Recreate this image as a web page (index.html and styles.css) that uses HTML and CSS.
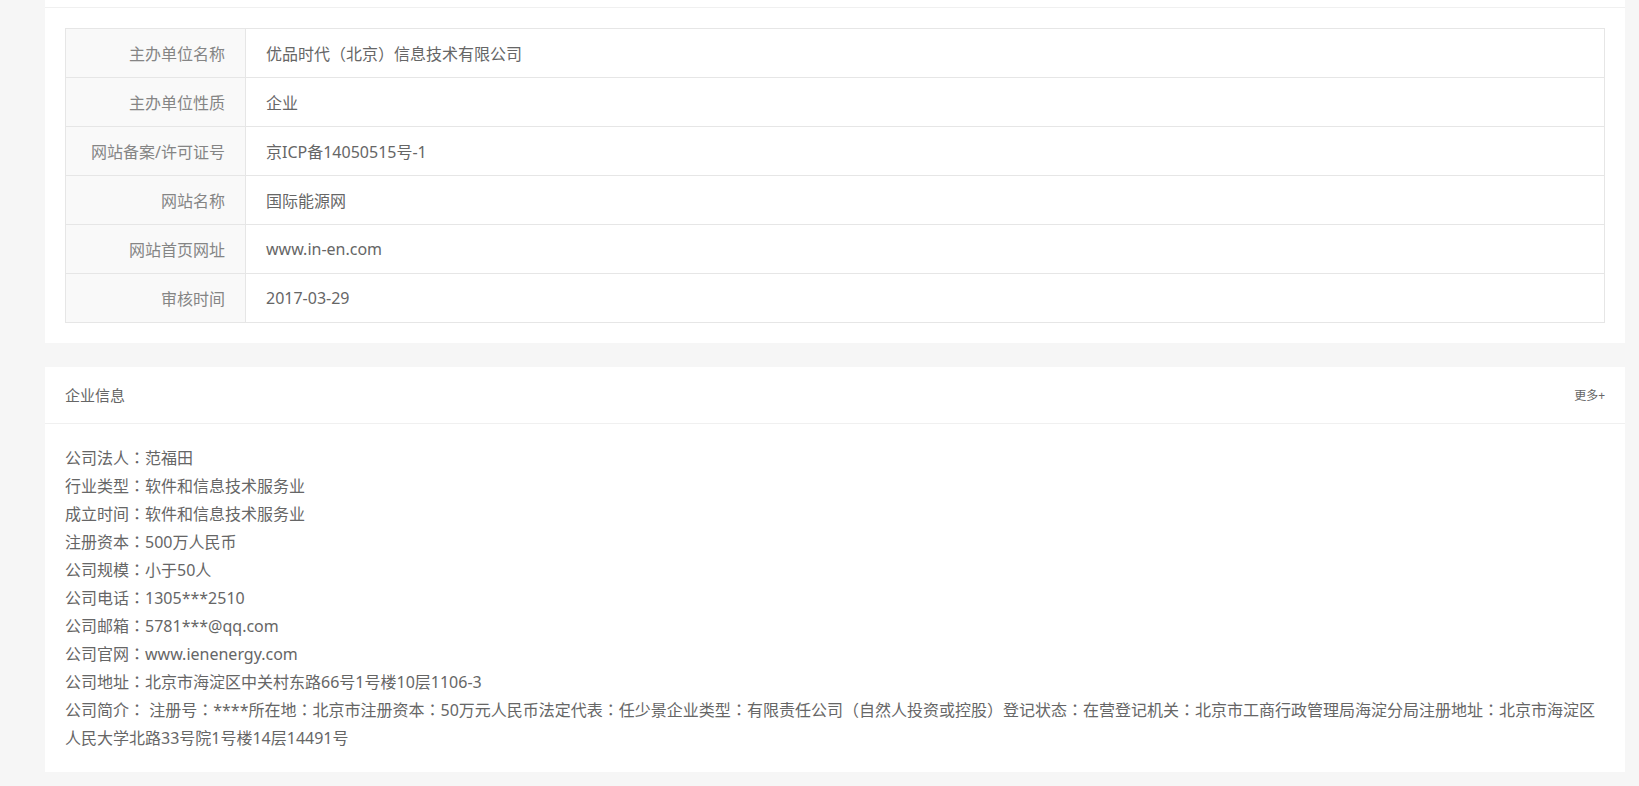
FILE: index.html
```html
<!DOCTYPE html>
<html lang="zh-CN">
<head>
<meta charset="utf-8">
<title>企业信息</title>
<link rel="stylesheet" href="styles.css">
</head>
<body>
<div class="page">
  <section class="card card-record">
    <div class="card-head"></div>
    <div class="card-body">
      <table class="info-table">
        <tr><th>主办单位名称</th><td>优品时代（北京）信息技术有限公司</td></tr>
        <tr><th>主办单位性质</th><td>企业</td></tr>
        <tr><th>网站备案/许可证号</th><td>京ICP备14050515号-1</td></tr>
        <tr><th>网站名称</th><td>国际能源网</td></tr>
        <tr><th>网站首页网址</th><td>www.in-en.com</td></tr>
        <tr><th>审核时间</th><td>2017-03-29</td></tr>
      </table>
    </div>
  </section>

  <section class="card">
    <div class="card-head">
      <h3 class="card-title">企业信息</h3>
      <a class="more" href="#">更多+</a>
    </div>
    <div class="card-body company">
      <p>公司法人<span class="c" lang="zh-Hant">：</span>范福田</p>
      <p>行业类型<span class="c" lang="zh-Hant">：</span>软件和信息技术服务业</p>
      <p>成立时间<span class="c" lang="zh-Hant">：</span>软件和信息技术服务业</p>
      <p>注册资本<span class="c" lang="zh-Hant">：</span>500万人民币</p>
      <p>公司规模<span class="c" lang="zh-Hant">：</span>小于50人</p>
      <p>公司电话<span class="c" lang="zh-Hant">：</span>1305***2510</p>
      <p>公司邮箱<span class="c" lang="zh-Hant">：</span>5781***@qq.com</p>
      <p>公司官网<span class="c" lang="zh-Hant">：</span>www.ienenergy.com</p>
      <p>公司地址<span class="c" lang="zh-Hant">：</span>北京市海淀区中关村东路66号1号楼10层1106-3</p>
      <p>公司简介<span class="c" lang="zh-Hant">：</span> 注册号<span class="c" lang="zh-Hant">：</span>****所在地<span class="c" lang="zh-Hant">：</span>北京市注册资本<span class="c" lang="zh-Hant">：</span>50万元人民币法定代表<span class="c" lang="zh-Hant">：</span>任少景企业类型<span class="c" lang="zh-Hant">：</span>有限责任公司（自然人投资或控股）登记状态<span class="c" lang="zh-Hant">：</span>在营登记机关<span class="c" lang="zh-Hant">：</span>北京市工商行政管理局海淀分局注册地址<span class="c" lang="zh-Hant">：</span>北京市海淀区人民大学北路33号院1号楼14层14491号</p>
    </div>
  </section>
</div>
</body>
</html>
```

FILE: styles.css
```css
html, body {
  margin: 0;
  padding: 0;
  background: #f6f6f6;
}

body {
  font-family: "Noto Sans", "Noto Sans CJK SC", sans-serif;
  font-size: 16px;
  color: #666;
  overflow: hidden;
}

.page {
  width: 1580px;
  margin: -49px 0 0 45px;
  display: flex;
  flex-direction: column;
  gap: 24px;
}

.card {
  background: #fff;
}

.card-head {
  height: 56px;
  border-bottom: 1px solid #f0f0f0;
  display: flex;
  align-items: center;
  justify-content: space-between;
  padding: 0 20px;
}

.card-title {
  margin: 0 0 2px;
  font-size: 15px;
  font-weight: normal;
  color: #666;
}

.more {
  font-size: 12px;
  color: #666;
  text-decoration: none;
}

.card-body {
  padding: 20px;
}

.info-table {
  width: 100%;
  border-collapse: collapse;
  border: 1px solid #e6e6e6;
}

.info-table th,
.info-table td {
  height: 48px;
  padding: 0 20px;
  border: 1px solid #e6e6e6;
  font-weight: normal;
  vertical-align: middle;
}

.info-table th {
  width: 139px;
  text-align: right;
  background: #f9f9f9;
  color: #858585;
}

.info-table td {
  text-align: left;
  color: #666;
}

.company p {
  margin: 0;
  line-height: 28px;
  color: #666;
}

.c {
  font-family: "Noto Sans CJK TC", sans-serif;
  line-height: 1;
}
```
